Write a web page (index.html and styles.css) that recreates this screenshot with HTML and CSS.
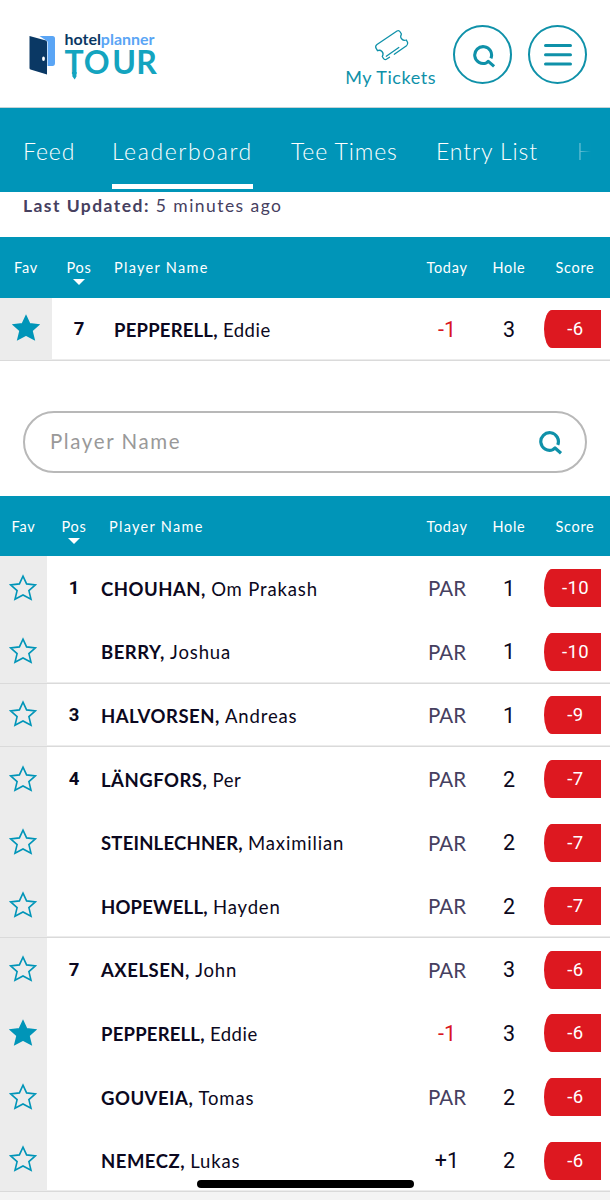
FILE: index.html
```
<!DOCTYPE html>
<html lang="en">
<head>
<meta charset="utf-8">
<meta name="viewport" content="width=device-width">
<title>Leaderboard</title>
<link rel="stylesheet" href="styles.css">
</head>
<body>
<svg class="defs" aria-hidden="true">
  <symbol id="star" viewBox="0 0 28 27"><path d="M14 2.2 17.6 9.9 26.4 10.9 19.9 16.6 22 25.2 14 21 6 25.2 8.1 16.6 1.6 10.9 10.4 9.9Z"/></symbol>
  <symbol id="search" viewBox="0 0 24 24"><path d="M18.7 13.9A8.800 8.800 0 1 0 14 18.600L16 17 22 22.300" fill="none" stroke="currentColor" stroke-width="3.200" stroke-linejoin="round"/></symbol>
</svg>
<header class="top">
  <svg class="logo" viewBox="0 0 140 60" role="img" aria-label="hotelplanner TOUR">
    <path d="M18.5 6H31.5Q34 6 34 8.500V33Q34 36 31.500 36H26.600V11.500Z" fill="#5aa5f5"/>
    <path d="M8.500 6 25 10.500Q26 11 26 12V44.500L9.500 39.500Q8.500 39 8.500 38Z" fill="#0a3864"/>
    <ellipse cx="22.500" cy="28.700" rx="1.400" ry="2.200" fill="#fff"/>
    <text class="brand" x="43.500" y="14.500" textLength="90" lengthAdjust="spacingAndGlyphs"><tspan fill="#0a3864">hotel</tspan><tspan fill="#5aa5f5">planner</tspan></text>
    <text class="tour" y="44.200" x="43.500 62.700 91.300 115.300">TOUR</text>
    <path d="M51 42H55.600L55.400 46.500 53.700 49.500 51.500 46.500Z" fill="#14a4bf"/>
  </svg>
  <div class="actions">
    <a class="tickets">
      <svg viewBox="0 0 36 34" class="ticket"><path d="M15.500 29.200 12 31.500Q10.300 32 9.300 30.200L8.300 28.500Q10 25.500 8 23.500 6 21.500 3.500 22.700L2 20.200Q1 18 3 16.500L23 3Q25 2 26.200 4L27.400 6Q25.800 9 27.800 11 29.500 13 32.300 12L33.600 14.500Q34 16.500 32.500 17.700L20.300 26.200M12.300 28.200 24.800 19.500"/></svg>
      <span>My Tickets</span>
    </a>
    <button class="round"><svg class="find"><use href="#search"/></svg></button>
    <button class="round"><svg class="burger" viewBox="0 0 28 22"><path d="M1.500 1.500H26.500M1.500 10.800H26.500M1.500 20.100H26.500"/></svg></button>
  </div>
</header>
<nav class="tabs">
  <a class="feed">Feed</a><a class="active">Leaderboard</a><a class="tee">Tee Times</a><a class="entry">Entry List</a><a class="more">H</a>
</nav>
<p class="updated"><b>Last Updated:</b> 5 minutes ago</p>

<section class="table pinned">
  <div class="row head"><span>Fav</span><span class="sort">Pos</span><span class="player">Player Name</span><span>Today</span><span>Hole</span><span class="sc">Score</span></div>
  <div class="row last"><span class="fav on"><svg><use href="#star"/></svg></span><span class="pos">7</span><span class="name"><b class="tight">PEPPERELL,</b> <i>Eddie</i></span><span class="num under">-1</span><span class="num">3</span><span class="score">-6</span></div>
</section>

<div class="search-area">
  <label class="search"><input type="text" placeholder="Player Name"><svg class="find"><use href="#search"/></svg></label>
</div>

<section class="table">
  <div class="row head"><span>Fav</span><span class="sort">Pos</span><span class="player">Player Name</span><span>Today</span><span>Hole</span><span class="sc">Score</span></div>
  <div class="row"><span class="fav"><svg><use href="#star"/></svg></span><span class="pos">1</span><span class="name"><b>CHOUHAN,</b> <i class="loose">Om Prakash</i></span><span class="par">PAR</span><span class="num">1</span><span class="score">-10</span></div>
  <div class="row last"><span class="fav"><svg><use href="#star"/></svg></span><span class="pos"></span><span class="name"><b>BERRY,</b> <i class="loose">Joshua</i></span><span class="par">PAR</span><span class="num">1</span><span class="score">-10</span></div>
  <div class="row last"><span class="fav"><svg><use href="#star"/></svg></span><span class="pos">3</span><span class="name"><b>HALVORSEN,</b> <i class="loose">Andreas</i></span><span class="par">PAR</span><span class="num">1</span><span class="score">-9</span></div>
  <div class="row"><span class="fav"><svg><use href="#star"/></svg></span><span class="pos">4</span><span class="name"><b>LÄNGFORS,</b> <i>Per</i></span><span class="par">PAR</span><span class="num">2</span><span class="score">-7</span></div>
  <div class="row"><span class="fav"><svg><use href="#star"/></svg></span><span class="pos"></span><span class="name"><b class="tight">STEINLECHNER,</b> <i class="loose">Maximilian</i></span><span class="par">PAR</span><span class="num">2</span><span class="score">-7</span></div>
  <div class="row last"><span class="fav"><svg><use href="#star"/></svg></span><span class="pos"></span><span class="name"><b class="tight">HOPEWELL,</b> <i class="loose">Hayden</i></span><span class="par">PAR</span><span class="num">2</span><span class="score">-7</span></div>
  <div class="row"><span class="fav"><svg><use href="#star"/></svg></span><span class="pos">7</span><span class="name"><b>AXELSEN,</b> <i class="loose">John</i></span><span class="par">PAR</span><span class="num">3</span><span class="score">-6</span></div>
  <div class="row"><span class="fav on"><svg><use href="#star"/></svg></span><span class="pos"></span><span class="name"><b class="tight">PEPPERELL,</b> <i>Eddie</i></span><span class="num under">-1</span><span class="num">3</span><span class="score">-6</span></div>
  <div class="row"><span class="fav"><svg><use href="#star"/></svg></span><span class="pos"></span><span class="name"><b>GOUVEIA,</b> <i class="loose">Tomas</i></span><span class="par">PAR</span><span class="num">2</span><span class="score">-6</span></div>
  <div class="row last"><span class="fav"><svg><use href="#star"/></svg></span><span class="pos"></span><span class="name"><b>NEMECZ,</b> <i class="loose">Lukas</i></span><span class="num">+1</span><span class="num">2</span><span class="score">-6</span></div>
</section>
<div class="home-indicator"></div>
</body>
</html>
```
FILE: styles.css
```
* { box-sizing: border-box; }
:root { --teal: #0095b8; --line: #0f91a9; --ink: #0b0820; }
html { background: #f4f4f4; }
body {
  margin: 0;
  width: 610px;
  height: 1200px;
  overflow: hidden;
  position: relative;
  background: #f4f4f4;
  font-family: Lato, "Liberation Sans", sans-serif;
  color: var(--ink);
}
.defs { display: none; }

.top {
  height: 108px;
  background: #fff;
  border-bottom: 1px solid #c5d3d6;
  display: flex;
  justify-content: space-between;
  padding: 0 23px 0 21px;
}
.logo { width: 140px; height: 60px; margin-top: 30px; }
.brand { font: 700 15px Lato, sans-serif; }
.tour { font: 700 32px Lato, sans-serif; fill: #14a4bf; }
.actions { display: flex; align-items: flex-start; }
.tickets {
  display: flex;
  flex-direction: column;
  align-items: center;
  margin: 28px 17px 0 0;
  font-size: 18px;
  line-height: 24px;
  letter-spacing: .55px;
  color: var(--line);
  white-space: nowrap;
}
.ticket { width: 36px; height: 34px; margin: 0 0 3px 2px; fill: none; stroke: var(--line); stroke-width: 1.300; stroke-linecap: round; }
.round {
  width: 59px;
  height: 59px;
  margin: 25px 0 0;
  padding: 0;
  border: 2.500px solid var(--line);
  border-radius: 50%;
  background: #fff;
  color: var(--line);
  display: flex;
  align-items: center;
  justify-content: center;
}
.round + .round { margin-left: 16px; }
.find { width: 24px; height: 24px; color: var(--line); flex: none; }
.round .find { margin: 3px 0 0 3px; width: 23px; height: 23px; }
.burger { width: 28px; height: 22px; fill: none; stroke: currentColor; stroke-width: 3; stroke-linecap: round; }

.tabs {
  height: 84px;
  background: var(--teal);
  color: #fff;
  display: flex;
  gap: 38px;
  padding-left: 23px;
  overflow: hidden;
  white-space: nowrap;
  font-size: 23px;
  font-weight: 300;
  letter-spacing: .9px;
  line-height: 87px;
}
.tabs a { height: 81px; flex: none; }
.tabs .active { border-bottom: 5px solid #fff; width: 141px; margin-left: -1px; letter-spacing: 1.600px; }
.feed { width: 52px; }
.tee { width: 107px; }
.entry { width: 103px; }
.tabs .more { width: 24px; opacity: .5; mask-image: linear-gradient(90deg, #000, transparent 14px); }

.updated {
  margin: 0;
  height: 45px;
  padding-left: 23px;
  background: #fff;
  color: #46405f;
  font-size: 17.500px;
  line-height: 28px;
  letter-spacing: 1.450px;
}

.table { background: #fff; }
.row {
  display: grid;
  grid-template-columns: 47px 54px 311px 70px 54px 65px;
  height: 63.600px;
  align-items: center;
  text-align: center;
}
.pinned .row { grid-template-columns: 52px 54px 306px 70px 54px 65px; }
.row.last { box-shadow: inset 0 -1.500px #dadada; }
.row.last .fav { height: 62.100px; align-self: start; }
.row.head {
  height: 60px;
  background: var(--teal);
  color: #fff;
  font-size: 14.500px;
  letter-spacing: .7px;
}
.pinned .row.head { height: 60.500px; }
.sort { position: relative; }
.sort::after {
  content: "";
  position: absolute;
  left: 21px;
  top: 20px;
  border: 6px solid transparent;
  border-top-color: #fff;
  border-bottom: 0;
}
.row .player { text-align: left; padding-left: 8px; letter-spacing: 1.300px; }
.head .sc { padding-left: 8px; margin-right: -5px; }
.fav { align-self: stretch; background: #ececec; display: flex; align-items: center; justify-content: center; }
.fav svg { width: 28px; height: 27px; margin: 0 1px 2px 0; fill: none; stroke: var(--teal); stroke-width: 1.600; }
.fav.on svg { fill: var(--teal); }
.pos { font: 700 18.500px Roboto, sans-serif; }
.name { text-align: left; font-size: 18.500px; letter-spacing: .5px; white-space: nowrap; padding-top: 1px; }
.name i { font-style: normal; }
.name .tight { letter-spacing: .200px; }
.name .loose { letter-spacing: .850px; }
.pinned .name { padding-left: 8px; }
.par { color: #46405f; font-size: 20.500px; }
.num { font: 400 21.500px Roboto, sans-serif; }
.under { color: #d9161f; }
.score {
  justify-self: end;
  width: 57px;
  height: 38px;
  line-height: 38px;
  background: #dd1820;
  color: #fff;
  border-radius: 8px 0 0 8px / 19px 0 0 19px;
  font-family: Roboto, sans-serif;
  font-size: 18.500px;
  letter-spacing: .4px;
  padding-left: 6px;
}

.search-area { background: #fff; padding: 50px 23px 23.400px; }
.search {
  display: flex;
  align-items: center;
  height: 62px;
  border: 2px solid #b8b8b8;
  border-radius: 31px;
  padding: 0 22px 2px 25px;
}
.search input {
  flex: 1;
  border: 0;
  outline: 0;
  padding: 0;
  background: none;
  font: 400 20.500px Lato, sans-serif;
  letter-spacing: 1.600px;
}
.search input::placeholder { color: #999; }
.search .find { margin-top: 3px; }

.home-indicator {
  position: absolute;
  left: 197px;
  top: 1180px;
  width: 217px;
  height: 8px;
  border-radius: 4px;
  background: #000;
}
```
